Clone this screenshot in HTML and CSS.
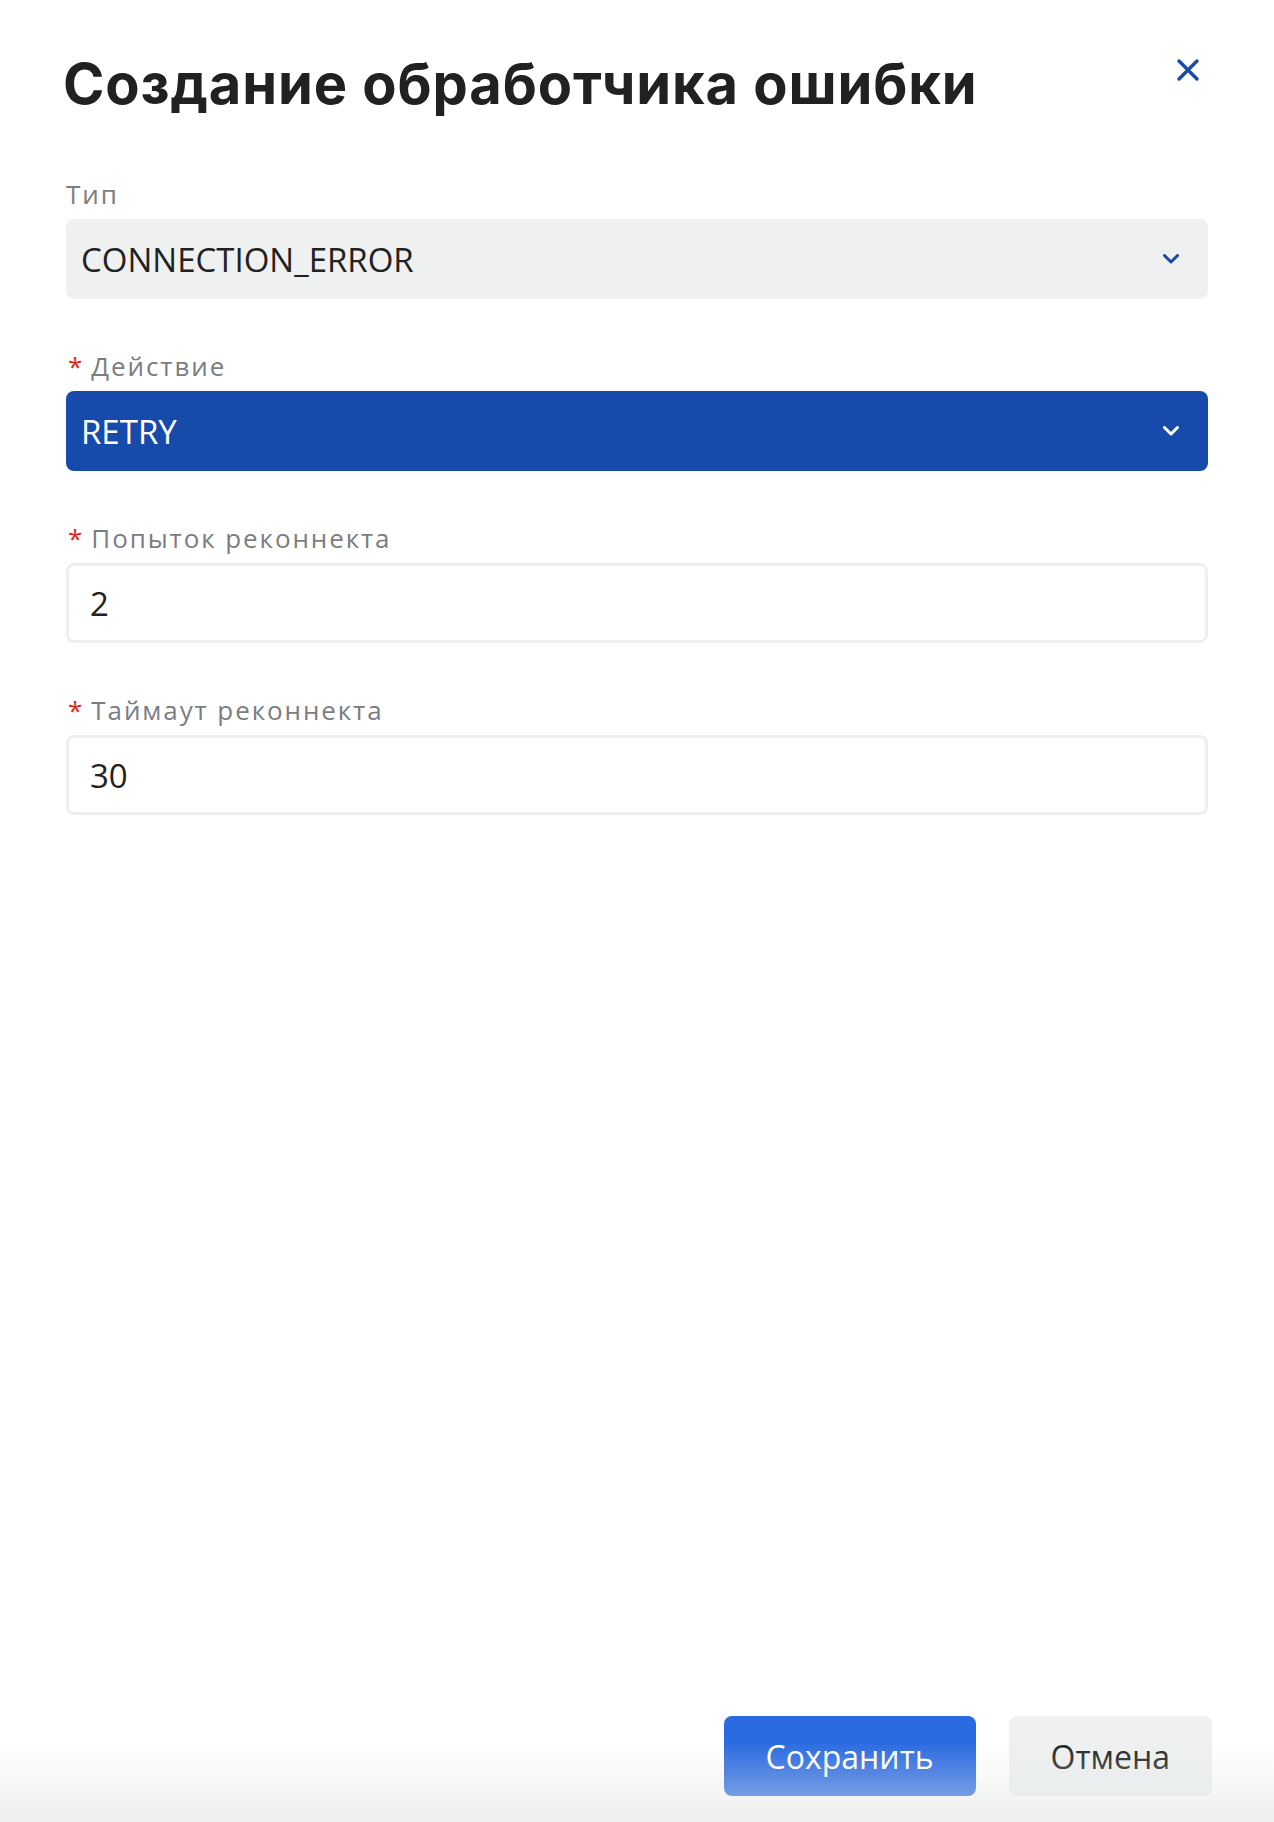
FILE: index.html
```html
<!DOCTYPE html>
<html lang="ru">
<head>
    <meta charset="UTF-8">
    <meta name="viewport" content="width=device-width, initial-scale=1.0">
    <title>Создание обработчика ошибки</title>
    <link rel="stylesheet" href="styles.css">
</head>
<body>
    <div class="modal">
        <!-- Заголовок -->
        <div class="modal-header">
            <h1 class="modal-title">Создание обработчика ошибки</h1>
            <button class="close-btn" type="button">
                <svg width="24" height="24" viewBox="0 0 24 24"><path d="M3 3L21 21M21 3L3 21" stroke="#1a4aa8" stroke-width="3.4" stroke-linecap="round" fill="none"/></svg>
            </button>
        </div>

        <!-- Поля формы -->
        <div class="form">
            <div class="field">
                <div class="label">Тип</div>
                <div class="select">
                    <span class="select-value">CONNECTION_ERROR</span>
                    <svg class="chevron" width="16" height="10" viewBox="0 0 16 10"><path d="M1.5 1.5L8 8L14.5 1.5" stroke="#1a4aa8" stroke-width="3" stroke-linecap="round" stroke-linejoin="round" fill="none"/></svg>
                </div>
            </div>

            <div class="field">
                <div class="label"><span class="req">*</span>Действие</div>
                <div class="select select-active">
                    <span class="select-value">RETRY</span>
                    <svg class="chevron" width="16" height="10" viewBox="0 0 16 10"><path d="M1.5 1.5L8 8L14.5 1.5" stroke="#ffffff" stroke-width="3" stroke-linecap="round" stroke-linejoin="round" fill="none"/></svg>
                </div>
            </div>

            <div class="field">
                <div class="label"><span class="req">*</span>Попыток реконнекта</div>
                <input class="input" type="text" value="2">
            </div>

            <div class="field">
                <div class="label"><span class="req">*</span>Таймаут реконнекта</div>
                <input class="input" type="text" value="30">
            </div>
        </div>

        <!-- Кнопки -->
        <div class="modal-footer">
            <button class="btn btn-primary" type="button">Сохранить</button>
            <button class="btn btn-secondary" type="button">Отмена</button>
        </div>
    </div>
</body>
</html>
```

FILE: styles.css
```css
* {
    box-sizing: border-box;
}

body {
    margin: 0;
    padding: 0;
    background: #ffffff;
    font-family: "Open Sans", "Noto Sans", sans-serif;
    color: #222222;
}

.modal {
    height: 100vh;
    display: flex;
    flex-direction: column;
    padding: 50px 66px 26px 66px;
    position: relative;
}

/* Затемнение внизу окна */
.modal::after {
    content: "";
    position: absolute;
    left: 0;
    right: 0;
    bottom: 0;
    height: 80px;
    background: linear-gradient(rgba(226, 230, 230, 0), rgba(226, 230, 230, 0.6));
    pointer-events: none;
}

.modal-header {
    display: flex;
    justify-content: space-between;
    align-items: flex-start;
}

.modal-title {
    margin: 0 0 0 -3px;
    font-family: "Inter", "Noto Sans", sans-serif;
    font-weight: 700;
    font-size: 56px;
    line-height: 68px;
    letter-spacing: 0.9px;
    color: #212121;
}

.close-btn {
    background: none;
    border: none;
    padding: 0;
    margin: 8px 8px 0 0;
    width: 24px;
    height: 24px;
    cursor: pointer;
}

.close-btn svg {
    display: block;
}

.form {
    display: flex;
    flex-direction: column;
    gap: 50px;
    margin-top: 59px;
}

.label {
    font-size: 26px;
    line-height: 34px;
    letter-spacing: 1.9px;
    color: #7b7d80;
    margin-bottom: 8px;
}

.req {
    color: #e5231d;
    margin: 0 9px 0 2px;
    letter-spacing: 0;
}

.select {
    height: 80px;
    border-radius: 8px;
    background: #eff1f1;
    display: flex;
    align-items: center;
    justify-content: space-between;
    padding: 0 29px 0 15px;
}

.select-value {
    font-size: 33px;
    color: #222222;
}

.select-active {
    background: #164aab;
}

.select-active .select-value {
    color: #ffffff;
}

.chevron {
    display: block;
}

.input {
    display: block;
    width: 100%;
    height: 80px;
    border: 3px solid #efefef;
    border-radius: 8px;
    padding: 0 21px;
    font-family: "Open Sans", "Noto Sans", sans-serif;
    font-size: 33px;
    color: #222222;
    background: #ffffff;
    outline: none;
}

.modal-footer {
    margin-top: auto;
    display: flex;
    justify-content: flex-end;
    gap: 33px;
    margin-right: -4px;
}

.btn {
    height: 80px;
    padding: 0 42px;
    border: none;
    border-radius: 8px;
    font-family: "Open Sans", "Noto Sans", sans-serif;
    font-size: 32px;
    cursor: pointer;
}

.btn-primary {
    background: #2b6be1;
    color: #ffffff;
}

.btn-secondary {
    background: #eff1f1;
    color: #222222;
}
```
